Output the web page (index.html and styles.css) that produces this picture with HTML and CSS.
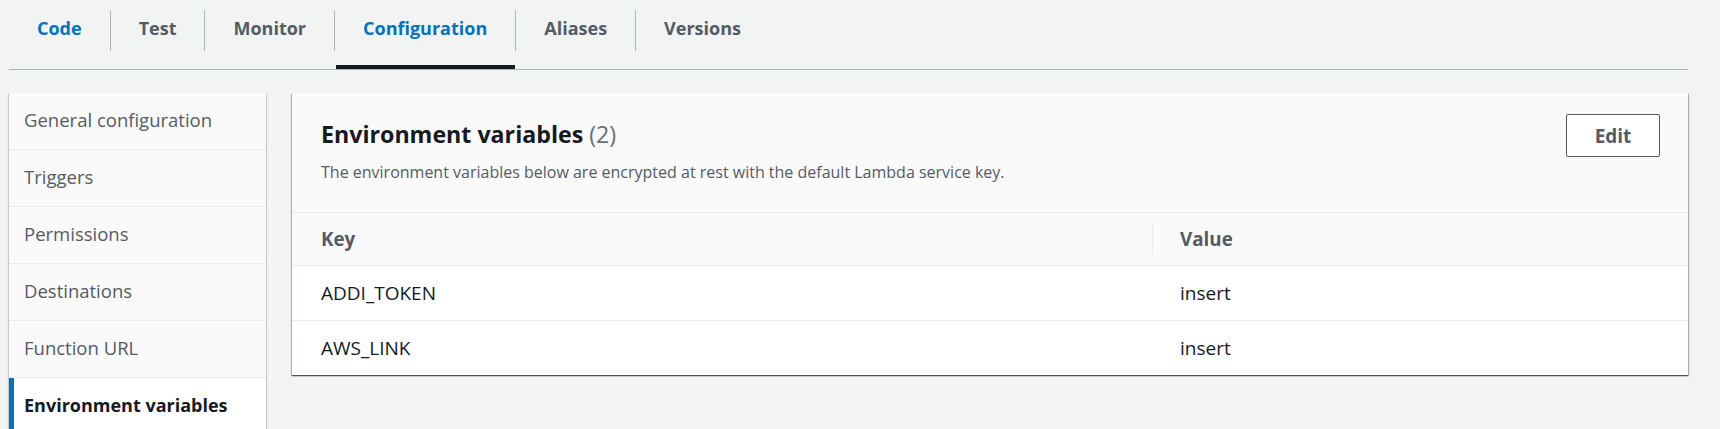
FILE: index.html
```html
<!DOCTYPE html>
<html lang="en">
<head>
<meta charset="utf-8">
<title>Configuration - Environment variables</title>
<link rel="stylesheet" href="styles.css">
</head>
<body>
<div class="page">
  <nav class="tabs">
    <a class="tab active-blue">Code</a>
    <span class="sep"></span>
    <a class="tab">Test</a>
    <span class="sep"></span>
    <a class="tab">Monitor</a>
    <span class="sep"></span>
    <a class="tab selected">Configuration</a>
    <span class="sep"></span>
    <a class="tab">Aliases</a>
    <span class="sep"></span>
    <a class="tab">Versions</a>
  </nav>
  <div class="layout">
    <ul class="side-nav">
      <li class="nav-item">General configuration</li>
      <li class="nav-item">Triggers</li>
      <li class="nav-item">Permissions</li>
      <li class="nav-item">Destinations</li>
      <li class="nav-item">Function URL</li>
      <li class="nav-item active">Environment variables</li>
    </ul>
    <section class="panel">
      <header class="panel-header">
        <div class="title-row">
          <h2 class="title">Environment variables <span class="count">(2)</span></h2>
          <button class="btn">Edit</button>
        </div>
        <p class="desc">The environment variables below are encrypted at rest with the default Lambda service key.</p>
      </header>
      <div class="table">
        <div class="th"><span>Key</span></div>
        <div class="th th-sep"><span>Value</span></div>
        <div class="td">ADDI_TOKEN</div>
        <div class="td td-val">insert</div>
        <div class="td">AWS_LINK</div>
        <div class="td td-val">insert</div>
      </div>
    </section>
  </div>
</div>
</body>
</html>
```
FILE: styles.css
```css
* { box-sizing: border-box; }
html, body { margin: 0; padding: 0; }
body {
  background: #f2f3f3;
  font-family: "Open Sans", "Noto Sans", sans-serif;
  color: #16191f;
  height: 429px;
  overflow: hidden;
}
.page {
  margin-left: 9px;
  width: 1679px;
}
.tabs {
  display: flex;
  align-items: flex-start;
  border-bottom: 1px solid #aab7b8;
  height: 70px;
}
.tab {
  height: 69px;
  padding: 0 28px 9px;
  display: flex;
  align-items: center;
  font-size: 18px;
  font-weight: 700;
  color: #545b64;
  border-bottom: 4px solid transparent;
}
.tab.active-blue { color: #0073bb; }
.tab.selected {
  color: #0073bb;
  border-bottom-color: #16191f;
  margin-left: 1px;
  padding-left: 27px;
}
.sep {
  width: 1px;
  height: 41px;
  margin-top: 10px;
  background: #aab7b8;
  flex: none;
}
.layout {
  display: flex;
  gap: 26px;
  margin-top: 23px;
  align-items: flex-start;
}
.side-nav {
  list-style: none;
  margin: 0;
  padding: 0;
  width: 257px;
  flex: none;
  background: #fafafa;
  box-shadow: 0 1px 1px 0 rgba(0,28,36,.3), 1px 1px 1px 0 rgba(0,28,36,.15), -1px 1px 1px 0 rgba(0,28,36,.15);
}
.nav-item {
  height: 57px;
  padding: 0 0 3px 15px;
  display: flex;
  align-items: center;
  font-size: 18.5px;
  color: #545b64;
  border-bottom: 1px solid #eaeded;
}
.nav-item.active {
  background: #fff;
  color: #16191f;
  font-weight: 700;
  font-size: 18px;
  border-left: 5px solid #0073bb;
  padding-left: 10px;
  border-bottom: 0;
}
.panel {
  flex: 1;
  background: #fff;
  box-shadow: 0 1px 1px 0 rgba(0,28,36,.5), 1px 1px 1px 0 rgba(0,28,36,.25), -1px 1px 1px 0 rgba(0,28,36,.25);
}
.panel-header {
  background: #fafafa;
  padding: 21px 28px 20px 29px;
  height: 120px;
  border-bottom: 1px solid #eaeded;
}
.title-row {
  display: flex;
  align-items: center;
  justify-content: space-between;
  height: 43px;
}
.title {
  margin: -4px 0 0;
  font-size: 23.2px;
  font-weight: 700;
  color: #16191f;
}
.count {
  font-weight: 400;
  color: #687078;
}
.btn {
  width: 94px;
  height: 43px;
  border: 1px solid #545b64;
  border-radius: 2px;
  background: #fff;
  font-family: inherit;
  font-size: 19px;
  font-weight: 700;
  color: #545b64;
  padding: 0;
}
.desc {
  margin: 4px 0 0;
  font-size: 16px;
  line-height: 22px;
  color: #545b64;
}
.table {
  display: grid;
  grid-template-columns: 860px 1fr;
}
.th {
  background: #fafafa;
  height: 52px;
  display: flex;
  align-items: center;
  padding-left: 29px;
  font-size: 18.8px;
  font-weight: 700;
  color: #545b64;
}
.th-sep {
  padding-left: 0;
}
.th-sep span {
  border-left: 1px solid #eaeded;
  padding-left: 27px;
  height: 30px;
  display: flex;
  align-items: center;
}
.td {
  height: 55px;
  border-top: 1px solid #eaeded;
  display: flex;
  align-items: center;
  padding-left: 29px;
  font-size: 19px;
  color: #16191f;
}
.td-val { padding-left: 28px; }
```
